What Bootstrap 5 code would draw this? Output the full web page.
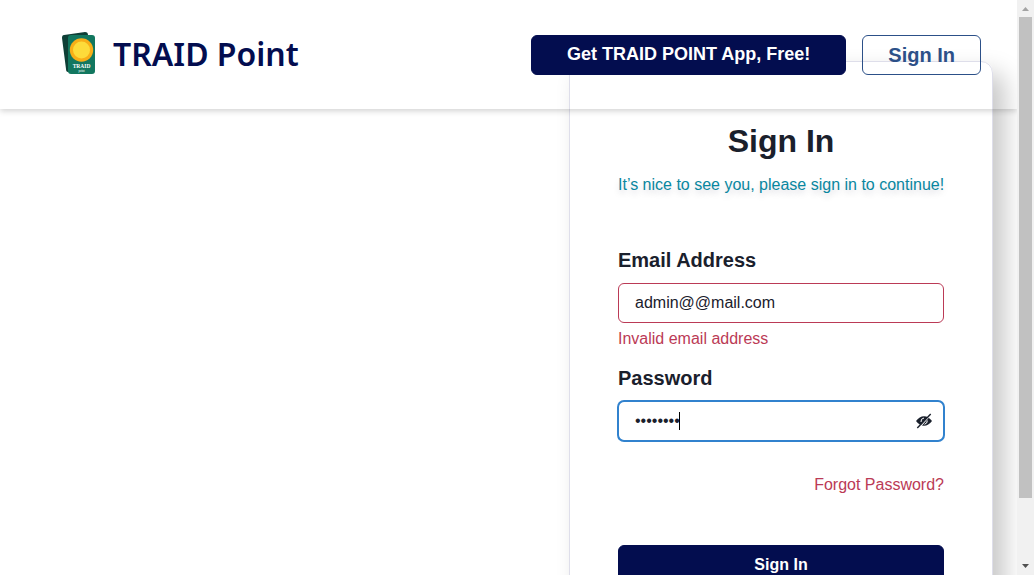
<!DOCTYPE html>
<html lang="en">
<head>
<meta charset="utf-8">
<meta name="viewport" content="width=device-width, initial-scale=1">
<title>TRAID Point - Sign In</title>
<link href="https://cdn.jsdelivr.net/npm/bootstrap@5.3.0/dist/css/bootstrap.min.css" rel="stylesheet">
<script src="https://cdn.jsdelivr.net/npm/bootstrap@5.3.0/dist/js/bootstrap.bundle.min.js" defer></script>
<style>
  :root { --navy: #030d4f; --ink: #1a202c; --rose: #bb3a56; --sky: #3182ce; }
  body { font-family: "Liberation Sans", Arial, sans-serif; color: var(--ink); background: #fff; }
  .page-head { z-index: 2; padding: 32px 36px 32px 56px; box-shadow: 0 2px 6px rgba(0, 0, 0, .18); }
  .brand { color: var(--navy); gap: 11px; }
  .brand-name { font: 600 32px/43px "Noto Sans", "Open Sans", sans-serif; padding-bottom: 2px; }
  .btn { border-radius: 6px; font-weight: 700; height: 40px; line-height: 24px; }
  .btn-navy, .btn-navy:hover { background: var(--navy); color: #fff; border-color: var(--navy); }
  .btn-app { font-size: 18px; padding: 5px 35px 7px; }
  .btn-enter, .btn-enter:hover { font-size: 20px; padding: 6px 25px; color: #2c5088; border-color: #2c5088; }
  .signin { width: 424px; max-width: 100%; margin: -48px 24px 0 auto; padding: 60px 48px 48px; border: 1px solid #dedeea; border-radius: 12px;
    box-shadow: 12px 12px 25px rgba(0, 0, 0, .22); }
  .signin h1 { font-size: 32px; line-height: 38px; font-weight: 700; margin-bottom: 13px; }
  .hello { color: #0987a0; line-height: 24px; margin-bottom: 48px; text-shadow: 0 4px 6px rgba(0, 0, 60, .15); white-space: nowrap; }
  .form-label { font-size: 20px; font-weight: 700; line-height: 30px; margin-bottom: 8px; }
  .form-control { height: 40px; border-radius: 6px; padding: 0 16px; color: var(--ink); line-height: 24px; }
  .field-bad { border-color: var(--rose); }
  .field-bad-note { margin-bottom: 12px; }
  .field-active, .field-active:focus { border-color: var(--sky); box-shadow: 0 0 0 1px var(--sky); }
  .text-rose { color: var(--rose); line-height: 24px; }
  .forgot { margin: 32px 0 48px; }
  .eye { color: var(--ink); width: 40px; height: 40px; }
  .caret-bar { left: 61px; top: 11px; width: 1px; height: 18px; background: #000; }
  .scroller { z-index: 3; width: 17px; background: #f1f1f1; }
  .scroller svg { width: 17px; height: 17px; }
  .thumb { height: 89%; width: 13px; background: #c1c1c1; }
</style>
</head>
<body>
<div class="d-flex vh-100 overflow-hidden">
  <div class="flex-grow-1 overflow-hidden">
    <header class="page-head position-relative d-flex align-items-center justify-content-between">
      <a class="brand d-flex align-items-center text-decoration-none" href="#">
        <svg width="46" height="45" viewBox="0 0 46 45" aria-hidden="true">
          <path d="M8 3 L29 0 Q32 0 32 3 L35 40 H12 Q10 40 10 37 L6 6 Q6 3 8 3Z" fill="#0e3f36"/>
          <rect x="12" y="3" width="27" height="39" rx="3" fill="#12775f"/>
          <circle cx="25.500" cy="18" r="11.700" fill="#f8ae17"/>
          <circle cx="25.500" cy="18" r="8.500" fill="#fddb3a"/>
          <text x="25.500" y="36" font-family="Liberation Serif, serif" font-weight="700" font-size="5.500" fill="#fff" text-anchor="middle">TRAID</text>
          <text x="25.500" y="40" font-family="Liberation Serif, serif" font-size="3" fill="#fff" text-anchor="middle">point</text>
        </svg>
        <span class="brand-name">TRAID Point</span>
      </a>
      <div class="d-flex gap-3">
        <button type="button" class="btn btn-navy btn-app">Get TRAID POINT App, Free!</button>
        <button type="button" class="btn btn-enter">Sign In</button>
      </div>
    </header>
    <main>
      <form class="signin">
        <h1 class="text-center">Sign In</h1>
        <p class="hello text-center">It’s nice to see you, please sign in to continue!</p>
        <div class="field-bad-note">
          <label class="form-label d-block" for="email">Email Address</label>
          <input class="form-control field-bad" type="text" inputmode="email" id="email" value="admin@@mail.com" aria-describedby="email-error">
          <div class="text-rose mt-1" id="email-error">Invalid email address</div>
        </div>
        <label class="form-label d-block" for="password">Password</label>
        <div class="position-relative">
          <input class="form-control field-active" type="password" id="password" value="password">
          <span class="caret-bar position-absolute"></span>
          <button type="button" class="eye btn border-0 p-0 position-absolute top-0 end-0 d-flex align-items-center justify-content-center" aria-label="Show password">
            <svg width="18" height="16" viewBox="0 0 18 16" aria-hidden="true">
              <path d="M1 8 Q4.500 3.300 9 3.300 Q13.500 3.300 17 8 Q13.500 12.700 9 12.700 Q4.500 12.700 1 8Z" fill="currentColor"/>
              <path d="M6 9 Q5.500 5.500 9 5" fill="none" stroke="#fff" stroke-width="1"/>
              <path d="M9.500 11.300 Q12.500 10.500 12.300 7.500" fill="none" stroke="#fff" stroke-width="1"/>
              <path d="M3.600 15.600 L16 1.400" stroke="#fff" stroke-width="1.200"/>
              <path d="M2.300 15 L15.700 1" stroke="currentColor" stroke-width="1.400"/>
            </svg>
          </button>
        </div>
        <div class="forgot text-end"><a class="text-rose text-decoration-none" href="#">Forgot Password?</a></div>
        <button type="submit" class="btn btn-navy w-100">Sign In</button>
      </form>
    </main>
  </div>
  <div class="scroller flex-shrink-0 position-relative d-flex flex-column align-items-center justify-content-between" aria-hidden="true">
    <svg class="flex-shrink-0" viewBox="0 0 17 17"><path d="M5 11 L8.500 7 L12 11Z" fill="#a3a3a3"/></svg>
    <div class="flex-grow-1 w-100 d-flex justify-content-center"><div class="thumb"></div></div>
    <svg class="flex-shrink-0" viewBox="0 0 17 17"><path d="M5 6 L12 6 L8.500 10Z" fill="#505050"/></svg>
  </div>
</div>
</body>
</html>
